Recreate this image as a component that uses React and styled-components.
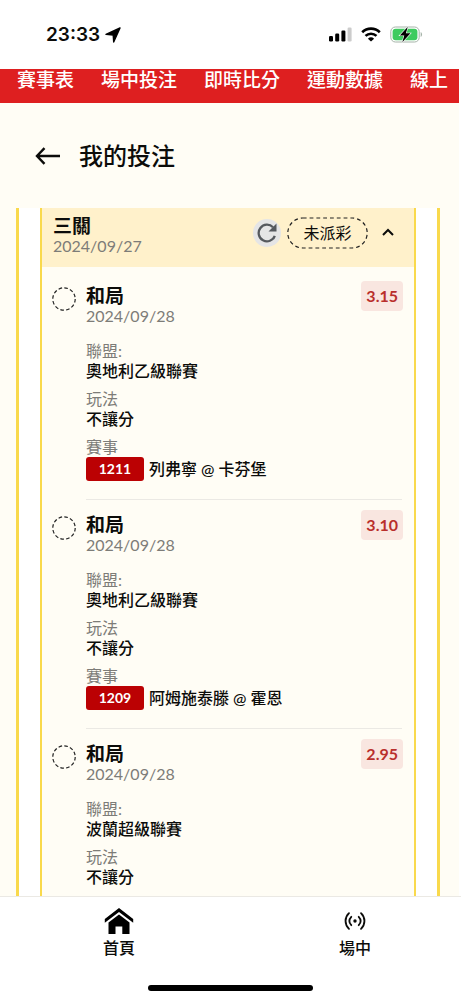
import React from 'react';
import styled, { createGlobalStyle, ThemeProvider } from 'styled-components';

const theme = {
	cream: '#fffdf5',
	headerFill: '#fff1cb',
	yellow: '#f9d94c',
	red: '#de1f20',
	tag: '#bb0103',
	oddsFill: '#f9e6e0',
	oddsText: '#b92f2c',
	muted: '#7d7c78',
	text: '#0c0c0a',
	line: '#ebe9e4'
};

const links = ['賽事表', '場中投注', '即時比分', '運動數據', '線上'];

const bets = [
	{
		pick: '和局',
		date: '2024/09/28',
		odds: '3.15',
		league: '奧地利乙級聯賽',
		play: '不讓分',
		match: { code: '1211', teams: '列弗寧 @ 卡芬堡' }
	},
	{
		pick: '和局',
		date: '2024/09/28',
		odds: '3.10',
		league: '奧地利乙級聯賽',
		play: '不讓分',
		match: { code: '1209', teams: '阿姆施泰滕 @ 霍恩' }
	},
	{
		pick: '和局',
		date: '2024/09/28',
		odds: '2.95',
		league: '波蘭超級聯賽',
		play: '不讓分'
	}
];

const GlobalStyle = createGlobalStyle`
	* {
		box-sizing: border-box;
	}

	body {
		margin: 0;
		background: #fff;
		color: #0c0c0a;
		font-family: Lato, "Noto Sans CJK TC", sans-serif;
		font-size: 16px;
		line-height: 20px;
	}

	button {
		font: inherit;
		color: inherit;
		border: 0;
		padding: 0;
		background: transparent;
	}

	a {
		color: inherit;
		text-decoration: none;
	}

	svg {
		display: block;
	}
`;

const Screen = styled.div`
	display: flex;
	flex-direction: column;
	height: 100vh;
	overflow: hidden;
`;

const StatusBar = styled.div`
	display: flex;
	flex: none;
	align-items: center;
	justify-content: space-between;
	height: 69px;
	padding: 0 38px 0 46px;
`;

const Clock = styled.div`
	display: flex;
	align-items: center;
	gap: 5px;
	font-family: Inter, sans-serif;
	font-size: 19px;
	font-weight: 600;
`;

const Signals = styled.div`
	display: flex;
	align-items: center;
	gap: 9px;
`;

const TopNav = styled.nav`
	display: flex;
	flex: none;
	gap: 27px;
	height: 34px;
	margin-right: 2px;
	padding-left: 17px;
	background: ${ props => props.theme.red };
	color: #fff;
	font-size: 19px;
	font-weight: 500;
	line-height: 22px;
	white-space: nowrap;
`;

const Page = styled.main`
	display: flex;
	flex: 1;
	flex-direction: column;
	min-height: 0;
	margin-right: 2px;
	background: ${ props => props.theme.cream };
`;

const TitleBar = styled.header`
	display: flex;
	flex: none;
	align-items: center;
	gap: 18px;
	height: 105px;
	padding: 0 35px;
`;

const Title = styled.h1`
	margin: 0;
	font-size: 24px;
	font-weight: 500;
	line-height: 32px;
`;

const List = styled.div`
	flex: 1;
	min-height: 0;
	margin: 0 19px 0 16px;
	padding: 0 21px;
	overflow-y: auto;
	scrollbar-width: none;
	background: #fff;
	border: solid ${ props => props.theme.yellow };
	border-width: 0 3px;
`;

const Slip = styled.section`
	background: ${ props => props.theme.cream };
	border: solid ${ props => props.theme.yellow };
	border-width: 0 2px;
`;

const SlipHeader = styled.header`
	display: flex;
	justify-content: space-between;
	height: 59px;
	padding: 8px 18px 0 11px;
	background: ${ props => props.theme.headerFill };
`;

const SlipActions = styled.div`
	display: flex;
	align-items: center;
	gap: 6px;
	height: 34px;
`;

const RefreshButton = styled.button`
	display: grid;
	place-items: center;
	width: 28px;
	height: 28px;
	border-radius: 50%;
	background: #e5e5e6;
	color: #55595e;
`;

const Status = styled.span`
	position: relative;
	width: 81px;
	line-height: 32px;
	text-align: center;

	svg {
		position: absolute;
		inset: 0;
	}
`;

const ToggleButton = styled.button`
	margin-left: 6px;
`;

const Heading = styled.h2`
	margin: 0;
	font-size: 19px;
	font-weight: 700;
	line-height: 20px;
`;

const DateText = styled.div`
	color: ${ props => props.theme.muted };
`;

const Bets = styled.ul`
	margin: 0;
	padding: 4px 12px 0 10px;
	list-style: none;
`;

const Bet = styled.li`
	display: flex;
	gap: 10px;
`;

const BetBody = styled.div`
	flex: 1;
	padding: 15px 0 18px;
	border-bottom: 1px solid ${ props => props.theme.line };
`;

const Marker = styled.svg`
	flex: none;
	margin-top: 16px;
`;

const BetTop = styled.div`
	display: flex;
	justify-content: space-between;
	margin-bottom: 15px;
`;

const Odds = styled.span`
	height: 30px;
	margin: -5px -1px 0 0;
	padding: 0 5px;
	border-radius: 4px;
	background: ${ props => props.theme.oddsFill };
	color: ${ props => props.theme.oddsText };
	font-size: 16px;
	font-weight: 700;
	line-height: 30px;
`;

const Details = styled.dl`
	margin: 0;
`;

const Term = styled.dt`
	color: ${ props => props.theme.muted };

	dd + & {
		margin-top: 8px;
	}
`;

const Value = styled.dd`
	display: flex;
	align-items: center;
	gap: 5px;
	margin: 0;
	font-weight: 500;
`;

const MatchCode = styled.span`
	width: 58px;
	border-radius: 3px;
	background: ${ props => props.theme.tag };
	color: #fff;
	font-size: 14px;
	font-weight: 700;
	line-height: 24px;
	text-align: center;
`;

const TabBar = styled.nav`
	display: flex;
	flex: none;
	justify-content: space-between;
	padding: 10px 90px 0 103px;
	border-top: 1px solid ${ props => props.theme.line };
`;

const Tab = styled.a`
	display: flex;
	flex-direction: column;
	align-items: center;
	gap: 3px;
	width: 32px;
	font-weight: 500;
	white-space: nowrap;

	svg {
		height: 28px;
	}
`;

const HomeIndicator = styled.div`
	flex: none;
	width: 36%;
	height: 6px;
	margin: 27px auto 9px;
	border-radius: 3px;
	background: #000;
`;

const BetItem = ({ bet }) => (
	<Bet>
		<Marker width="24" height="24" viewBox="0 0 24 24" fill="none" stroke="#222" strokeWidth="1.2">
			<circle cx="12" cy="12" r="11.2" strokeDasharray="3.6 2.26" />
		</Marker>
		<BetBody>
			<BetTop>
				<div>
					<Heading as="h3">{bet.pick}</Heading>
					<DateText>{bet.date}</DateText>
				</div>
				<Odds>{bet.odds}</Odds>
			</BetTop>
			<Details>
				<Term>聯盟:</Term>
				<Value>{bet.league}</Value>
				<Term>玩法</Term>
				<Value>{bet.play}</Value>
				{
					bet.match && (<>
						<Term>賽事</Term>
						<Value><MatchCode>{bet.match.code}</MatchCode>{bet.match.teams}</Value>
					</>)
				}
			</Details>
		</BetBody>
	</Bet>
);

export default function App() {
	return (
		<ThemeProvider theme={theme}>
			<GlobalStyle />
			<Screen>
				<StatusBar>
					<Clock>
						23:33
						<svg width="16" height="16" viewBox="0 0 16 16" stroke="#000" strokeLinejoin="round">
							<path d="M15 1 1 7.400 8.200 8 8.700 15Z" strokeWidth="1.400" />
						</svg>
					</Clock>
					<Signals>
						<svg width="23" height="15" viewBox="0 0 23 15">
							<rect x="0" y="9" width="4" height="5.500" rx="1.200" />
							<rect x="6.200" y="6.500" width="4" height="8" rx="1.200" />
							<rect x="12.400" y="3.500" width="4" height="11" rx="1.200" />
							<rect x="18.600" y=".5" width="4" height="14" rx="1.200" fill="#ccc" />
						</svg>
						<svg width="20" height="15" viewBox="0 0 20 15" fill="none" stroke="#000" strokeWidth="2.600">
							<path d="M1.200 5.200a12.600 12.600 0 0 1 17.600 0" />
							<path d="M4.500 8.900a8 8 0 0 1 11 0" />
							<path d="M10 14.600 6.900 11.700a4.500 4.500 0 0 1 6.200 0Z" fill="#000" stroke="none" />
						</svg>
						<svg width="33" height="17" viewBox="0 0 33 17">
							<rect x=".8" y="1" width="28.400" height="15" rx="4.600" fill="#fff" stroke="#a5b3a8" />
							<rect x="2.600" y="2.800" width="24.800" height="11.400" rx="3" fill="#3ecb5f" />
							<path d="M30.700 6v5c1.800-.8 1.800-4.200 0-5Z" fill="#a5b3a8" />
							<path d="m17.800.8-8 8.700h4.500l-2 6.700 8.200-8.900h-4.600Z" stroke="#fff" strokeWidth="1.200" paintOrder="stroke" />
						</svg>
					</Signals>
				</StatusBar>
				<TopNav>
					{
						links.map( (link) => (<a key={link} href="#">{link}</a>) )
					}
				</TopNav>
				<Page>
					<TitleBar>
						<button type="button" aria-label="返回">
							<svg width="26" height="18" viewBox="0 0 26 18" fill="none" stroke="#0c0c0a" strokeWidth="2.400">
								<path d="M9.500 1.200 2 9l7.500 7.800M2 9h23" />
							</svg>
						</button>
						<Title>我的投注</Title>
					</TitleBar>
					<List>
						<Slip>
							<SlipHeader>
								<div>
									<Heading>三關</Heading>
									<DateText>2024/09/27</DateText>
								</div>
								<SlipActions>
									<RefreshButton type="button" aria-label="重新整理">
										<svg width="22" height="22" viewBox="0 0 22 22" fill="none">
											<path d="M17 5.300A8.300 8.300 0 1 0 18.800 13.800" stroke="currentColor" strokeWidth="2.300" />
											<path d="M20.500 1.500v8h-8Z" fill="currentColor" />
										</svg>
									</RefreshButton>
									<Status>
										<svg width="81" height="32" viewBox="0 0 81 32" fill="none" stroke="#222" strokeWidth="1.200">
											<rect x=".8" y="1" width="79.400" height="30" rx="15" strokeDasharray="3.800 3" />
										</svg>
										未派彩
									</Status>
									<ToggleButton type="button" aria-label="收合">
										<svg width="16" height="16" viewBox="0 0 16 16" fill="none" stroke="#0c0c0a" strokeWidth="2">
											<path d="m3 10 5-5 5 5" />
										</svg>
									</ToggleButton>
								</SlipActions>
							</SlipHeader>
							<Bets>
								{
									bets.map( (bet, idx) => (<BetItem key={idx} bet={bet} />) )
								}
							</Bets>
						</Slip>
					</List>
				</Page>
				<TabBar>
					<Tab href="#">
						<svg width="30" height="28" viewBox="0 0 30 28">
							<path d="M15 1 .8 12v3.800L15 5.100l14.200 10.700V12Z" />
							<path d="M15 7.500 4.500 15.500V27h7v-7.500h6.800V27h7.200V15.500Z" />
						</svg>
						首頁
					</Tab>
					<Tab href="#">
						<svg width="22" height="28" viewBox="0 0 22 28" fill="none" stroke="#0c0c0a" strokeWidth="1.800" strokeLinecap="round">
							<path d="M5 6.200c-4.600 4.400-4.600 11.200 0 15.600M17 6.200c4.600 4.400 4.600 11.200 0 15.600" />
							<path d="M7.300 9.800c-2.300 2.500-2.300 5.900 0 8.400M14.700 9.800c2.300 2.500 2.300 5.900 0 8.400" />
							<circle cx="11" cy="14" r="1.700" fill="#0c0c0a" stroke="none" />
						</svg>
						場中
					</Tab>
				</TabBar>
				<HomeIndicator />
			</Screen>
		</ThemeProvider>
	);
}
